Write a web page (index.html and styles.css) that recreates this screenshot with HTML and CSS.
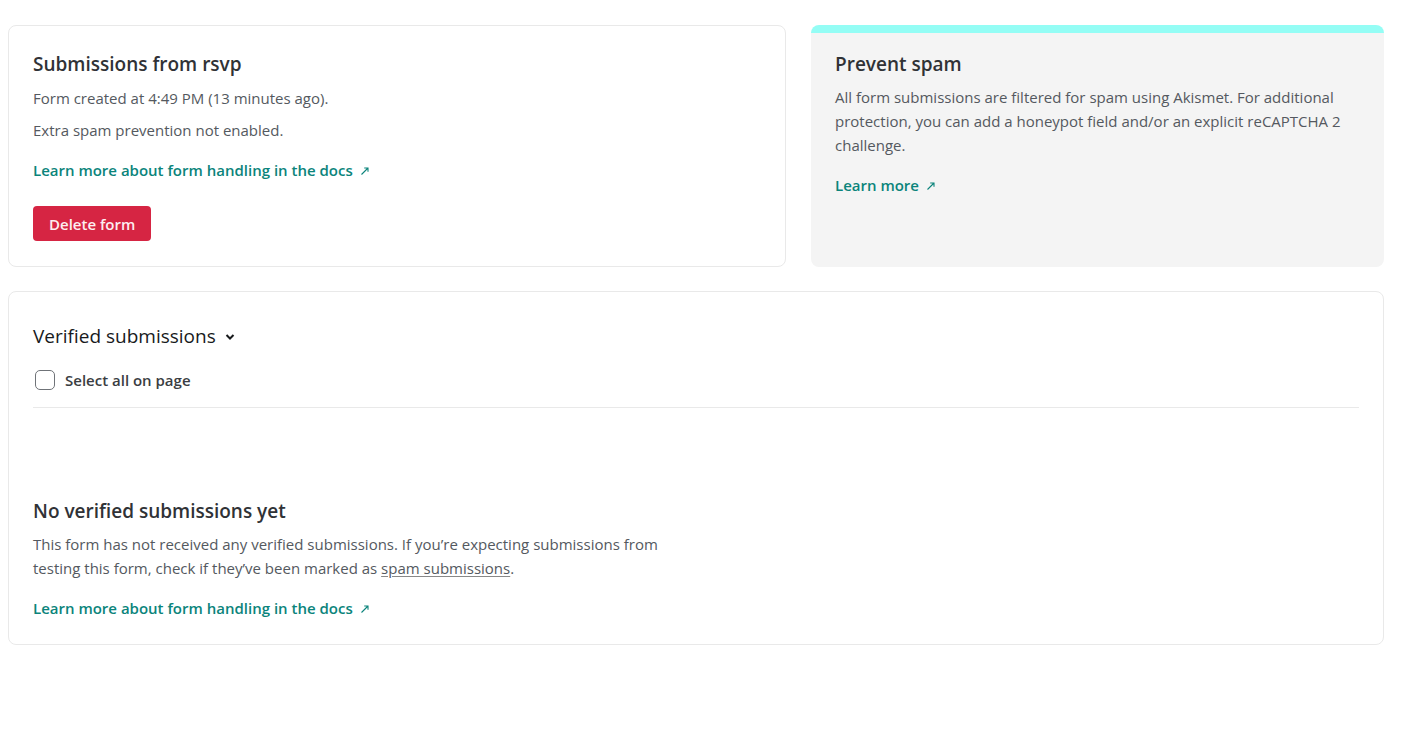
FILE: index.html
```html
<!DOCTYPE html>
<html lang="en">
<head>
<meta charset="utf-8">
<title>Submissions from rsvp</title>
<link rel="stylesheet" href="styles.css">
</head>
<body>
<main class="page">
  <div class="top">
    <section class="card info">
      <h2 class="card-title">Submissions from rsvp</h2>
      <p class="text mt8">Form created at 4:49 PM (13 minutes ago).</p>
      <p class="text mt8">Extra spam prevention not enabled.</p>
      <a class="link mt16" href="#">Learn more about form handling in the docs <svg class="ext" width="10" height="10" viewBox="0 0 10 10"><path d="M1.5 8.5 L8 2 M4.2 2 H8 V5.8" fill="none" stroke="currentColor" stroke-width="1.1"/></svg></a>
      <button class="btn-danger" type="button">Delete form</button>
    </section>
    <section class="card spam">
      <h2 class="card-title">Prevent spam</h2>
      <p class="text mt7">All form submissions are filtered for spam using Akismet. For additional protection, you can add a honeypot field and/or an explicit reCAPTCHA 2 challenge.</p>
      <a class="link mt16" href="#">Learn more <svg class="ext" width="10" height="10" viewBox="0 0 10 10"><path d="M1.5 8.5 L8 2 M4.2 2 H8 V5.8" fill="none" stroke="currentColor" stroke-width="1.1"/></svg></a>
    </section>
  </div>
  <section class="card list">
    <h2 class="list-title">Verified submissions <svg class="chev" width="10" height="8" viewBox="0 0 10 8"><path d="M1.5 2 L5 5.5 L8.5 2" fill="none" stroke="currentColor" stroke-width="2"/></svg></h2>
    <label class="select-all"><span class="box"></span>Select all on page</label>
    <div class="empty">
      <h3 class="card-title">No verified submissions yet</h3>
      <p class="text empty-text">This form has not received any verified submissions. If you’re expecting submissions from testing this form, check if they’ve been marked as <a class="plain" href="#">spam submissions</a>.</p>
      <a class="link mt16" href="#">Learn more about form handling in the docs <svg class="ext" width="10" height="10" viewBox="0 0 10 10"><path d="M1.5 8.5 L8 2 M4.2 2 H8 V5.8" fill="none" stroke="currentColor" stroke-width="1.1"/></svg></a>
    </div>
  </section>
</main>
</body>
</html>
```
FILE: styles.css
```css
* { box-sizing: border-box; }
html, body { margin: 0; background: #fff; }
body {
  font-family: "Open Sans", "Noto Sans", sans-serif;
  color: #2e3236;
}
.page {
  width: 1384px;
  padding: 25px 0 0 8px;
  display: flex;
  flex-direction: column;
  gap: 24px;
}
.top {
  display: grid;
  grid-template-columns: 778px 1fr;
  gap: 25px;
}
.card {
  border: 1px solid #e9e9e9;
  border-radius: 8px;
  background: #fff;
  display: flex;
  flex-direction: column;
  align-items: flex-start;
}
.info { padding: 24px 24px 25px 24px; }
.spam {
  background: #f4f4f4;
  border: none;
  border-top: 8px solid #94fdf5;
  padding: 17px 24px 24px 24px;
}
.card-title {
  margin: 0;
  font-size: 19px;
  line-height: 28px;
  font-weight: 600;
  color: #303236;
}
.text {
  margin: 0;
  font-size: 15px;
  line-height: 24px;
  color: #545960;
}
.mt7 { margin-top: 7px; }
.mt8 { margin-top: 8px; }
.mt16 { margin-top: 16px; }
.link {
  display: inline-flex;
  align-items: center;
  gap: 7px;
  font-size: 15px;
  line-height: 24px;
  font-weight: 600;
  color: #0b847b;
  text-decoration: none;
}
.ext { display: block; margin-top: 1px; }
.btn-danger {
  margin-top: 24px;
  height: 35px;
  padding: 0 16px;
  border: none;
  border-radius: 4px;
  background: #d62543;
  color: #fdeef1;
  font-family: inherit;
  font-size: 15px;
  font-weight: 600;
}
.list {
  padding: 30px 24px 24px 24px;
  align-items: stretch;
}
.list-title {
  margin: 0;
  display: flex;
  align-items: center;
  gap: 9px;
  font-size: 19px;
  line-height: 28px;
  font-weight: 500;
  color: #181a1c;
}
.chev { display: block; margin-top: 1px; }
.select-all {
  margin-top: 18px;
  display: flex;
  align-items: center;
  gap: 10px;
  font-size: 15px;
  line-height: 24px;
  font-weight: 600;
  color: #3a3d42;
  padding-bottom: 15px;
  border-bottom: 1px solid #e9e9e9;
}
.box {
  width: 20px;
  height: 20px;
  margin-left: 2px;
  border: 1.5px solid #6f7378;
  border-radius: 5px;
  background: #fff;
}
.empty {
  margin-top: 89px;
  display: flex;
  flex-direction: column;
  align-items: flex-start;
}
.empty-text { margin-top: 7px; max-width: 640px; }
.plain { color: inherit; text-decoration: underline; text-decoration-color: #888; text-underline-offset: 2px; }
```
